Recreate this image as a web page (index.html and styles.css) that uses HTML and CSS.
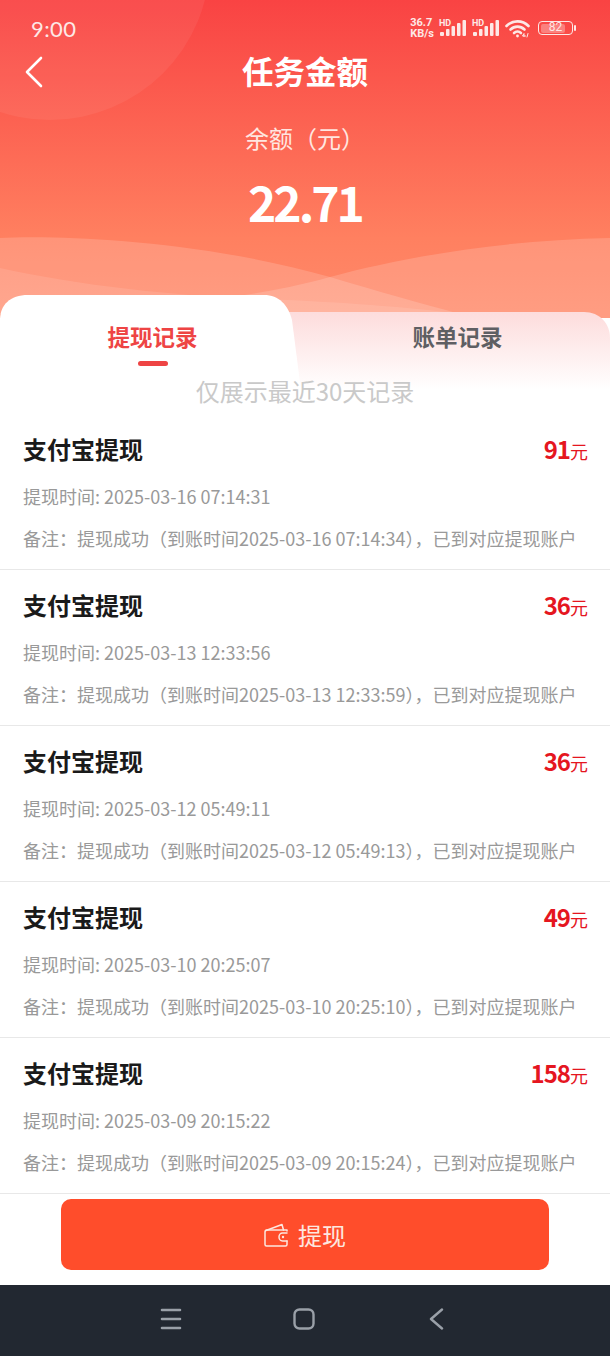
FILE: index.html
```html
<!DOCTYPE html>
<html>
<head>
  <meta charset="UTF-8">
  <title>任务金额</title>
  <link rel="stylesheet" href="styles.css">
</head>
<body>
  <div class="top">
    <svg class="top-bg" width="610" height="414" viewBox="0 0 610 414">
      <defs>
        <linearGradient id="headGrad" x1="0" y1="0" x2="0" y2="1">
          <stop offset="0" stop-color="#f94343"/>
          <stop offset="0.75" stop-color="#ff8060"/>
          <stop offset="1" stop-color="#ff8a6a"/>
        </linearGradient>
        <linearGradient id="tabGrad" x1="0" y1="0" x2="0" y2="1">
          <stop offset="0" stop-color="#fddcdc"/>
          <stop offset="1" stop-color="#ffffff"/>
        </linearGradient>
      </defs>
      <rect width="610" height="318" fill="url(#headGrad)"/>
      <circle cx="50" cy="-40" r="160" fill="#fff" opacity="0.06"/>
      <path d="M610 238C500 240 400 258 330 277C290 288 260 293 230 297V318H610Z" fill="#fff" opacity="0.16"/>
      <path d="M0 238C60 235 200 240 330 277C380 292 420 303 460 314H0Z" fill="#fff" opacity="0.16"/>
      <path d="M0 268C90 288 200 298 288 300C350 303 420 308 460 314H0Z" fill="#fff" opacity="0.1"/>
      <path d="M270 312H584C600 312 610 324 610 338V390H270Z" fill="url(#tabGrad)"/>
      <path d="M0 320C0 305 10 295 28 295H264C279 295 288 305 292 320L304 414H0Z" fill="#fff"/>
    </svg>

    <div class="status-bar">
      <span class="status-time">9:00</span>
      <div class="status-icons">
        <span class="net-speed">36.7<br>KB/s</span>
        <div class="signal">
          <span class="hd">HD</span>
          <svg width="27" height="16" viewBox="0 0 27 16" fill="#fde8e6">
            <rect x="0" y="12" width="4" height="4" rx="1"/>
            <rect x="6" y="9" width="3.5" height="7" rx="1"/>
            <rect x="11.5" y="6" width="3.5" height="10" rx="1"/>
            <rect x="17" y="3" width="3.5" height="13" rx="1"/>
            <rect x="22.5" y="0" width="3.5" height="16" rx="1"/>
          </svg>
        </div>
        <div class="signal">
          <span class="hd">HD</span>
          <svg width="27" height="16" viewBox="0 0 27 16" fill="#fde8e6">
            <rect x="0" y="12" width="4" height="4" rx="1"/>
            <rect x="6" y="9" width="3.5" height="7" rx="1"/>
            <rect x="11.5" y="6" width="3.5" height="10" rx="1"/>
            <rect x="17" y="3" width="3.5" height="13" rx="1"/>
            <rect x="22.5" y="0" width="3.5" height="16" rx="1"/>
          </svg>
        </div>
        <svg class="wifi" width="26" height="19" viewBox="0 0 26 19" fill="none" stroke="#fde8e6" stroke-width="2.6" stroke-linecap="round">
          <path d="M1.5 7C7.5 .8 17.5 .8 23.5 7"/>
          <path d="M5.5 10.5C9.5 6.6 15.5 6.6 19.5 10.5"/>
          <path d="M9 14C11 12.2 14 12.2 16 14"/>
          <circle cx="12.5" cy="17" r="1.4" fill="#fde8e6" stroke="none"/>
          <path d="M19 17.5V14.5L17.5 17H20.5M23 14.5L22 18" stroke-width="1"/>
        </svg>
        <div class="battery"><span class="battery-fill"></span><span class="battery-num">82</span></div>
      </div>
    </div>

    <div class="head">
      <svg class="back" width="18" height="32" viewBox="0 0 18 32" fill="none" stroke="#fff" stroke-width="2.6" stroke-linecap="round" stroke-linejoin="round">
        <path d="M16 2L2 16L16 30"/>
      </svg>
      <h1 class="title">任务金额</h1>
    </div>
    <p class="balance-label">余额（元）</p>
    <p class="balance">22.71</p>

    <div class="tabs">
      <div class="tab active">
        <span>提现记录</span>
        <i class="tab-line"></i>
      </div>
      <div class="tab">
        <span>账单记录</span>
      </div>
    </div>
    <p class="note">仅展示最近30天记录</p>
  </div>

  <div class="list">
    <div class="row">
      <div class="row-head">
        <span class="row-title">支付宝提现</span>
        <span class="amount">91<small>元</small></span>
      </div>
      <p class="row-time">提现时间: 2025-03-16 07:14:31</p>
      <p class="row-note">备注：提现成功（到账时间2025-03-16 07:14:34），已到对应提现账户</p>
    </div>
    <div class="row">
      <div class="row-head">
        <span class="row-title">支付宝提现</span>
        <span class="amount">36<small>元</small></span>
      </div>
      <p class="row-time">提现时间: 2025-03-13 12:33:56</p>
      <p class="row-note">备注：提现成功（到账时间2025-03-13 12:33:59），已到对应提现账户</p>
    </div>
    <div class="row">
      <div class="row-head">
        <span class="row-title">支付宝提现</span>
        <span class="amount">36<small>元</small></span>
      </div>
      <p class="row-time">提现时间: 2025-03-12 05:49:11</p>
      <p class="row-note">备注：提现成功（到账时间2025-03-12 05:49:13），已到对应提现账户</p>
    </div>
    <div class="row">
      <div class="row-head">
        <span class="row-title">支付宝提现</span>
        <span class="amount">49<small>元</small></span>
      </div>
      <p class="row-time">提现时间: 2025-03-10 20:25:07</p>
      <p class="row-note">备注：提现成功（到账时间2025-03-10 20:25:10），已到对应提现账户</p>
    </div>
    <div class="row">
      <div class="row-head">
        <span class="row-title">支付宝提现</span>
        <span class="amount">158<small>元</small></span>
      </div>
      <p class="row-time">提现时间: 2025-03-09 20:15:22</p>
      <p class="row-note">备注：提现成功（到账时间2025-03-09 20:15:24），已到对应提现账户</p>
    </div>
  </div>

  <div class="footer">
    <button class="withdraw" type="button">
      <svg width="24" height="24" viewBox="0 0 24 24" fill="none" stroke="#fde8e0" stroke-width="1.5" stroke-linejoin="round" stroke-linecap="round">
        <path d="M23 8V7H3C1.8 7 1 7.8 1 9V21.5C1 22.4 1.6 23 2.5 23H21.5C22.4 23 23 22.4 23 21.5V18"/>
        <path d="M2 7.5L18 1.5L19.5 7"/>
        <path d="M23 10H18.5C16.5 10 15 11.8 15 14C15 16.2 16.5 18 18.5 18H23"/>
        <circle cx="19" cy="14" r="1.2" fill="#fde8e0" stroke="none"/>
      </svg>
      <span>提现</span>
    </button>
  </div>

  <div class="nav">
    <svg width="22" height="22" viewBox="0 0 22 22" fill="none" stroke="#9aa0a8" stroke-width="2.6" stroke-linecap="round">
      <path d="M2 2H20M2 11H20M2 20H20"/>
    </svg>
    <svg width="22" height="22" viewBox="0 0 22 22" fill="none" stroke="#9aa0a8" stroke-width="2.4">
      <rect x="1.5" y="1.5" width="19" height="19" rx="5"/>
    </svg>
    <svg width="22" height="22" viewBox="0 0 22 22" fill="none" stroke="#9aa0a8" stroke-width="2.4" stroke-linecap="round" stroke-linejoin="round">
      <path d="M16 1.5L5 11L16 20.5"/>
    </svg>
  </div>
</body>
</html>
```

FILE: styles.css
```css
body {
  margin: 0;
  background-color: #fff;
  font-family: "Noto Sans CJK SC", "Noto Sans", sans-serif;
  color: #1a1a1a;
}

p,
h1 {
  margin: 0;
}

.top {
  position: relative;
  height: 414px;
  overflow: hidden;
}

.top-bg {
  position: absolute;
  top: 0;
  left: 0;
}

.status-bar,
.head,
.balance-label,
.balance,
.tabs,
.note {
  position: relative;
}

.status-bar {
  height: 56px;
  display: flex;
  align-items: center;
  justify-content: space-between;
  padding: 0 37px 0 31px;
  color: #fde8e6;
}

.status-time {
  font-family: Lato, sans-serif;
  font-size: 22px;
  letter-spacing: 0.4px;
}

.status-icons {
  display: flex;
  align-items: center;
  gap: 6px;
}

.net-speed {
  font-family: Roboto, sans-serif;
  font-size: 11px;
  font-weight: 700;
  line-height: 11px;
}

.signal {
  position: relative;
  width: 27px;
  height: 16px;
}

.signal svg {
  display: block;
}

.hd {
  position: absolute;
  top: -1px;
  left: -1px;
  font-family: Roboto, sans-serif;
  font-size: 9px;
  font-weight: 700;
  line-height: 8px;
}

.wifi {
  margin-left: -1px;
}

.battery {
  position: relative;
  width: 35px;
  height: 14px;
  margin-left: 1px;
  border: 1.5px solid #fde8e6;
  border-radius: 4px;
  box-sizing: border-box;
}

.battery::after {
  content: "";
  position: absolute;
  top: 2.5px;
  right: -4px;
  width: 2px;
  height: 6px;
  border-radius: 1px;
  background-color: #fde8e6;
}

.battery-fill {
  position: absolute;
  top: 1.5px;
  left: 1.5px;
  bottom: 1.5px;
  width: 24px;
  border-radius: 2px;
  background-color: rgba(255, 255, 255, 0.3);
}

.battery-num {
  position: absolute;
  top: 0;
  left: 0;
  width: 100%;
  text-align: center;
  font-family: Roboto, sans-serif;
  font-size: 12px;
  line-height: 11px;
}

.head {
  height: 32px;
  text-align: center;
}

.back {
  position: absolute;
  top: 0;
  left: 25px;
}

.title {
  font-size: 31.5px;
  font-weight: 700;
  line-height: 28px;
  color: #fff;
}

.balance-label {
  margin-top: 33px;
  font-size: 24px;
  line-height: 34px;
  text-align: center;
  color: #ffe6e0;
}

.balance {
  margin-top: 16px;
  font-size: 48px;
  font-weight: 700;
  line-height: 60px;
  letter-spacing: -3px;
  text-align: center;
  color: #fff;
}

.tabs {
  display: grid;
  grid-template-columns: 1fr 1fr;
  margin-top: 81px;
}

.tab {
  display: flex;
  flex-direction: column;
  align-items: center;
  padding-top: 8px;
  font-size: 22.5px;
  font-weight: 700;
  line-height: 32px;
  color: #5f5f63;
}

.tab.active {
  color: #ee4444;
}

.tab-line {
  display: block;
  width: 30px;
  height: 5px;
  margin-top: 9px;
  border-radius: 3px;
  background-color: #ee4444;
}

.note {
  margin-top: 9px;
  font-size: 24px;
  line-height: 32px;
  text-align: center;
  color: #c9c9c9;
}

.row {
  height: 136px;
  padding: 19px 22px 0 23px;
  border-bottom: 1px solid #e8e8e8;
}

.row-head {
  display: flex;
  justify-content: space-between;
  align-items: baseline;
  height: 32px;
}

.row-title {
  font-size: 24px;
  font-weight: 700;
  line-height: 32px;
}

.amount {
  font-size: 24px;
  font-weight: 700;
  line-height: 32px;
  letter-spacing: -1px;
  color: #e5161f;
}

.amount small {
  font-size: 18px;
  font-weight: 400;
  letter-spacing: 0;
}

.row-time,
.row-note {
  font-size: 18px;
  line-height: 28px;
  color: #999;
  white-space: nowrap;
}

.row-time {
  margin-top: 17px;
}

.row-note {
  margin-top: 14px;
}

.footer {
  padding: 5px 61px 15px;
}

.withdraw {
  display: flex;
  align-items: center;
  justify-content: center;
  gap: 10px;
  width: 100%;
  height: 71px;
  border: 0;
  border-radius: 10px;
  background-color: #ff4d2b;
  font-family: inherit;
  font-size: 24px;
  color: #fde8e0;
}

.nav {
  display: flex;
  align-items: center;
  justify-content: center;
  gap: 111px;
  height: 71px;
  padding-right: 3px;
  padding-bottom: 4px;
  box-sizing: border-box;
  background-color: #222831;
}
```
